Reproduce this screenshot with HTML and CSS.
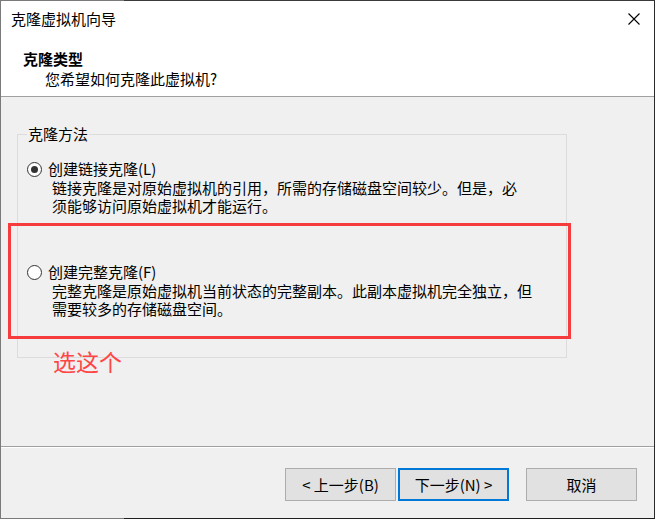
FILE: index.html
```html
<!DOCTYPE html>
<html lang="zh-CN">
<head>
<meta charset="utf-8">
<title>克隆虚拟机向导</title>
<link rel="stylesheet" href="styles.css">
</head>
<body>
<div class="window">
  <div class="head">
    <div class="titlebar">
      <span class="title">克隆虚拟机向导</span>
      <svg class="close" width="12" height="12" viewBox="0 0 12 12"><path d="M0.5 0.5 L11.5 11.5 M11.5 0.5 L0.5 11.5" stroke="#000" stroke-width="1.1" fill="none"/></svg>
    </div>
    <div class="intro">
      <h1 class="heading">克隆类型</h1>
      <p class="sub">您希望如何克隆此虚拟机?</p>
    </div>
  </div>
  <div class="body">
    <fieldset class="group">
      <legend class="legend">克隆方法</legend>
      <div class="option">
        <div class="label"><span class="radio checked"></span>创建链接克隆(L)</div>
        <div class="desc"><div class="line">链接克隆是对原始虚拟机的引用，所需的存储磁盘空间较少。但是，必</div><div class="line">须能够访问原始虚拟机才能运行。</div></div>
      </div>
      <div class="option second">
        <div class="label"><span class="radio"></span>创建完整克隆(F)</div>
        <div class="desc"><div class="line">完整克隆是原始虚拟机当前状态的完整副本。此副本虚拟机完全独立，但</div><div class="line">需要较多的存储磁盘空间。</div></div>
      </div>
    </fieldset>
    <div class="mark"></div>
    <div class="note">选这个</div>
  </div>
  <div class="footer">
    <button class="btn">&lt; 上一步(B)</button>
    <button class="btn primary">下一步(N) &gt;</button>
    <button class="btn">取消</button>
  </div>
</div>
</body>
</html>
```
FILE: styles.css
```css
html, body {
  margin: 0;
  padding: 0;
  background: #fff;
}
body {
  font-family: "Noto Sans CJK SC", "Noto Sans", sans-serif;
  font-size: 15px;
  color: #000;
}
.window {
  position: relative;
  width: 655px;
  height: 519px;
  box-sizing: border-box;
  border-style: solid;
  border-width: 1px;
  border-color: #3a3a3a #2b2b2b #1f1f1f #7a7a7a;
  display: flex;
  flex-direction: column;
  background: #f0f0f0;
}
.window::before,
.window::after {
  content: "";
  position: absolute;
  left: -1px;
  width: 124px;
  height: 1px;
  background: #7a7a7a;
}
.window::before { top: -1px; }
.window::after { bottom: -1px; }

.head {
  height: 96px;
  box-sizing: border-box;
  background: #fff;
  border-bottom: 1px solid #a0a0a0;
}
.titlebar {
  display: flex;
  justify-content: space-between;
  align-items: flex-start;
  padding: 8px 14px 0 10px;
  line-height: 20px;
}
.close {
  margin-top: 4px;
}
.intro {
  padding: 20px 0 0 22px;
}
.heading {
  margin: 0;
  font-size: 15px;
  font-weight: bold;
  line-height: 20px;
}
.sub {
  margin: 0 0 0 22px;
  line-height: 20px;
}

.body {
  position: relative;
  flex: 1;
  padding: 27px 0 0 16px;
}
.group {
  margin: 0;
  width: 550px;
  height: 234px;
  box-sizing: border-box;
  border: 1px solid #dcdcdc;
  padding: 15px 8px 0 9px;
}
.legend {
  padding: 0 1px;
  line-height: 20px;
}
.option {
  display: flex;
  flex-direction: column;
}
.option.second {
  margin-top: 47px;
}
.label {
  display: flex;
  align-items: center;
  line-height: 20px;
}
.radio {
  width: 13px;
  height: 13px;
  border: 1px solid #333;
  border-radius: 50%;
  background: #fff;
  margin-right: 6px;
  position: relative;
  box-sizing: content-box;
}
.radio.checked::after {
  content: "";
  position: absolute;
  left: 3px;
  top: 3px;
  width: 7px;
  height: 7px;
  border-radius: 50%;
  background: #333;
}
.desc {
  padding-left: 25px;
}
.line {
  height: 18px;
  line-height: 18px;
}
.mark {
  position: absolute;
  left: 7px;
  top: 126px;
  width: 557px;
  height: 110px;
  border: 3px solid #f53b3b;
}
.note {
  position: absolute;
  left: 52px;
  top: 249px;
  font-size: 23px;
  line-height: 30px;
  color: #ff4545;
}

.footer {
  height: 72px;
  box-sizing: border-box;
  border-top: 1px solid #a0a0a0;
  box-shadow: inset 0 1px 0 #fff;
  display: flex;
  justify-content: flex-end;
  align-items: flex-start;
  gap: 2px;
  padding: 21px 17px 0 0;
}
.btn {
  width: 111px;
  height: 33px;
  box-sizing: border-box;
  border: 1px solid #adadad;
  background: #e1e1e1;
  font-family: "Noto Sans CJK SC", "Noto Sans", sans-serif;
  font-size: 15px;
  color: #000;
  padding: 0;
  margin: 0;
}
.btn.primary {
  border: 2px solid #0078d7;
  margin-right: 15px;
}
```
